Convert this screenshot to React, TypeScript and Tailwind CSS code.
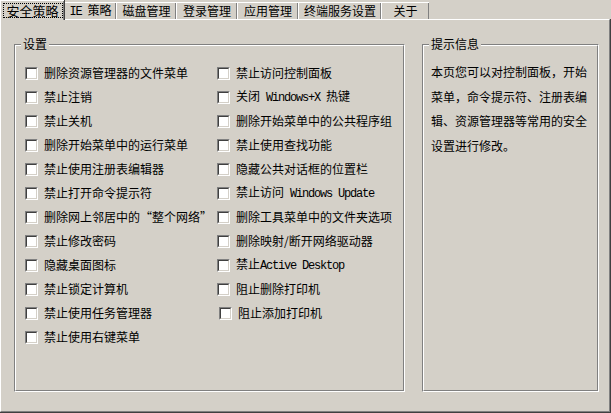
const tabs = [
  { label: "安全策略", w: "w-[64px]", active: true },
  { label: "IE 策略", w: "w-[52px]" },
  { label: "磁盘管理", w: "w-[60px]" },
  { label: "登录管理", w: "w-[61px]" },
  { label: "应用管理", w: "w-[61px]" },
  { label: "终端服务设置", w: "w-[83px]" },
  { label: "关于", w: "w-[48px]" },
];

const leftItems = [
  "删除资源管理器的文件菜单",
  "禁止注销",
  "禁止关机",
  "删除开始菜单中的运行菜单",
  "禁止使用注册表编辑器",
  "禁止打开命令提示符",
  "删除网上邻居中的“整个网络”",
  "禁止修改密码",
  "隐藏桌面图标",
  "禁止锁定计算机",
  "禁止使用任务管理器",
  "禁止使用右键菜单",
];

const rightItems = [
  "禁止访问控制面板",
  "关闭 Windows+X 热键",
  "删除开始菜单中的公共程序组",
  "禁止使用查找功能",
  "隐藏公共对话框的位置栏",
  "禁止访问 Windows Update",
  "删除工具菜单中的文件夹选项",
  "删除映射/断开网络驱动器",
  "禁止Active Desktop",
  "阻止删除打印机",
  "阻止添加打印机",
];

const hint = [
  "本页您可以对控制面板，开始",
  "菜单，命令提示符、注册表编",
  "辑、资源管理器等常用的安全",
  "设置进行修改。",
];

// Latin runs in the old dialog font are half-width; render them in a mono face
function Label({ text }: { text: string }) {
  const parts = text.split(/([A-Za-z+ ]*[A-Za-z][A-Za-z+ ]*)/);
  return (
    <span className="whitespace-pre">
      {parts.map((p, i) =>
        /[A-Za-z]/.test(p) ? (
          <span
            key={i}
            className="font-['Liberation_Mono'] text-[12px] tracking-[-1.2px]"
          >
            {p}
          </span>
        ) : (
          <span key={i}>{p}</span>
        )
      )}
    </span>
  );
}

function Checkbox() {
  return (
    <div className="h-[13px] w-[13px] shrink-0 border border-t-[#808080] border-l-[#808080] border-r-white border-b-white">
      <div className="h-full w-full border border-t-[#404040] border-l-[#404040] border-r-[#d4d0c8] border-b-[#d4d0c8] bg-white" />
    </div>
  );
}

function Row({ text, shift }: { text: string; shift?: boolean }) {
  return (
    <div className={`flex h-[24px] items-center gap-[6px] ${shift ? "ml-[2px]" : ""}`}>
      <Checkbox />
      <Label text={text} />
    </div>
  );
}

function Group({
  title,
  className,
  children,
}: {
  title: string;
  className: string;
  children: React.ReactNode;
}) {
  return (
    <div
      className={`relative h-[348px] shrink-0 border border-t-[#808080] border-l-[#808080] border-r-white border-b-white ${className}`}
    >
      <div className="h-full w-full border border-t-white border-l-white border-r-[#808080] border-b-[#808080]">
        {children}
      </div>
      <span className="absolute -top-[8px] left-[6px] bg-[#d4d0c8] px-[2px] text-[12px] leading-[14px]">
        {title}
      </span>
    </div>
  );
}

export default function App() {
  return (
    <div className="h-[413px] w-[611px] overflow-hidden bg-[#d4d0c8] font-['Noto_Sans_CJK_SC',sans-serif] text-[12px] text-black">
      <div className="flex h-[19px] items-end">
        {tabs.map((t) =>
          t.active ? (
            <div
              key={t.label}
              className={`${t.w} relative z-10 -mb-px flex h-[20px] shrink-0 items-center justify-center border-t border-l border-white bg-[#d4d0c8] pb-px shadow-[inset_-1px_0_0_#808080,1px_0_0_#404040]`}
            >
              <div className="flex h-[15px] w-[60px] items-center justify-center border border-dotted border-black text-[13px] leading-none">
                {t.label}
              </div>
            </div>
          ) : (
            <div
              key={t.label}
              className={`${t.w} flex h-[17px] shrink-0 items-center justify-center border-t border-l border-white shadow-[inset_-1px_0_0_#808080,inset_-2px_0_0_#d4d0c8] leading-none`}
            >
              <Label text={t.label} />
            </div>
          )
        )}
      </div>
      <div className="h-[394px] w-[611px] border-r border-b border-[#404040]">
        <div className="flex h-full w-full gap-[17px] border-t border-l border-t-white border-l-white border-r border-b border-r-[#808080] border-b-[#808080] pt-[24px] pl-[13px]">
          <Group title="设置" className="w-[391px]">
            <div className="flex pt-[15px] pl-[9px]">
              <div className="flex w-[192px] flex-col">
                {leftItems.map((t) => (
                  <Row key={t} text={t} />
                ))}
              </div>
              <div className="flex flex-col">
                {rightItems.map((t, i) => (
                  <Row key={t} text={t} shift={i === rightItems.length - 1} />
                ))}
              </div>
            </div>
          </Group>
          <Group title="提示信息" className="w-[177px]">
            <div className="flex flex-col pt-[14px] pl-[7px] leading-[24.7px]">
              {hint.map((l) => (
                <span key={l} className="whitespace-nowrap">
                  {l}
                </span>
              ))}
            </div>
          </Group>
        </div>
      </div>
    </div>
  );
}
